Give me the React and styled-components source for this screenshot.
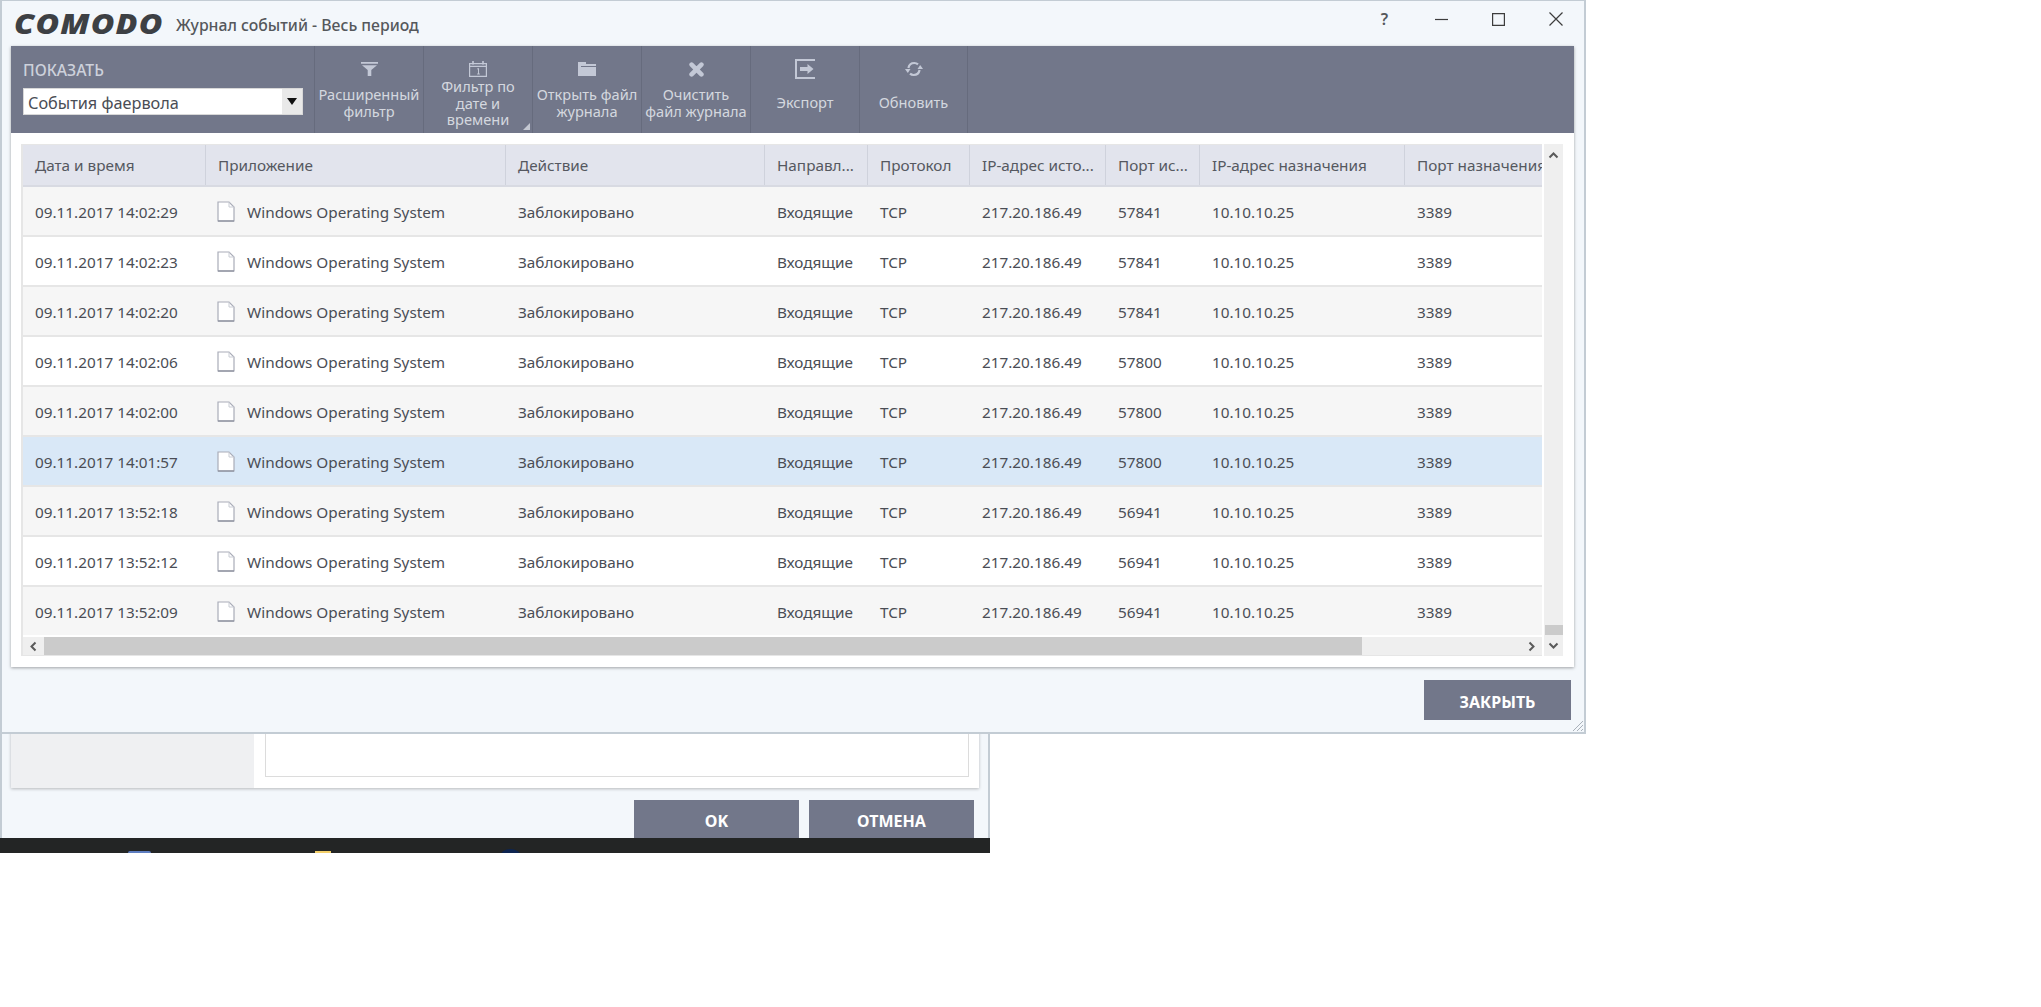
import React from "react";
import styled, { createGlobalStyle } from "styled-components";

const FONT = `"Noto Sans", "Open Sans", "Liberation Sans", sans-serif`;

const Global = createGlobalStyle`
  html, body {
    margin: 0;
    padding: 0;
    background: #fff;
    width: 2041px;
    height: 1007px;
    overflow: hidden;
    font-family: ${FONT};
  }
`;

const Desktop = styled.div`
  position: relative;
  width: 2041px;
  height: 1007px;
  background: #fff;
  overflow: hidden;
`;

/* ---------- окно позади ---------- */
const BackWindow = styled.div`
  position: absolute;
  left: 0;
  top: 700px;
  width: 990px;
  height: 138px;
  box-sizing: border-box;
  background: #f3f7fb;
  border-left: 2px solid #c3ccd4;
  border-right: 2px solid #c3ccd4;
  padding: 0 8px;
  display: flex;
  flex-direction: column;
`;

const BackPanel = styled.div`
  display: flex;
  height: 88px;
  flex: none;
  margin: 0 1px 0 1px;
  background: #fff;
  box-shadow: 0 1px 3px rgba(0, 0, 0, 0.25);
`;

const BackSide = styled.div`
  width: 243px;
  background: #eff0f2;
`;

const BackArea = styled.div`
  flex: 1;
  margin: 0 10px 11px 11px;
  border: 1px solid #dcdcdc;
  border-top: 0;
  background: #fff;
`;

const BackButtons = styled.div`
  display: flex;
  justify-content: flex-end;
  gap: 10px;
  margin-top: 12px;
  padding-right: 6px;
`;

const GreyButton = styled.button`
  box-sizing: border-box;
  width: ${(p) => p.$w}px;
  height: ${(p) => p.$h}px;
  border: 0;
  padding: 3px 0 0;
  background: #72778a;
  color: #fff;
  font-family: ${FONT};
  font-size: 16px;
  font-weight: 700;
`;

const Taskbar = styled.div`
  position: absolute;
  left: 0;
  top: 838px;
  width: 990px;
  height: 15px;
  background: #232525;
  overflow: hidden;
`;

const TrayIcon = styled.span`
  position: absolute;
  left: ${(p) => p.$x}px;
  top: ${(p) => p.$y}px;
  width: ${(p) => p.$w}px;
  height: 12px;
  background: ${(p) => p.$c};
  border-radius: ${(p) => p.$r || "2px"};
`;

/* ---------- журнал ---------- */
const LogWindow = styled.div`
  position: absolute;
  left: 0;
  top: 0;
  width: 1586px;
  height: 734px;
  box-sizing: border-box;
  background: #f3f7fb;
  border: 2px solid #c3ccd4;
  border-top-width: 1px;
  display: flex;
  flex-direction: column;
`;

const TitleBar = styled.div`
  height: 45px;
  flex: none;
  display: flex;
  align-items: center;
  padding-left: 12px;
`;

const LogoBox = styled.span`
  width: 162px;
  flex: none;
  margin-top: -1px;
`;

const Logo = styled.span`
  display: inline-block;
  font-family: "Open Sans", ${FONT};
  font-style: italic;
  font-weight: 800;
  font-size: 28px;
  line-height: 30px;
  letter-spacing: 1px;
  color: #3d4044;
  transform: scaleX(1.15);
  transform-origin: left center;
`;

const Title = styled.span`
  font-size: 15.8px;
  font-weight: 500;
  color: #55585c;
  margin-top: 3px;
`;

const WinControls = styled.div`
  margin-left: auto;
  display: flex;
  align-items: center;
  height: 36px;
  margin-top: -9px;
`;

const WinControl = styled.span`
  width: 57px;
  display: flex;
  justify-content: center;
  align-items: center;
  color: #55585c;
  font-size: 16px;
  font-weight: 600;
`;

const Panel = styled.div`
  margin: 0 10px 0 9px;
  height: 621px;
  flex: none;
  background: #fff;
  box-shadow: 0 1px 3px rgba(0, 0, 0, 0.35);
  display: flex;
  flex-direction: column;
`;

const Toolbar = styled.div`
  height: 87px;
  flex: none;
  display: flex;
  background: #72778a;
`;

const ShowBlock = styled.div`
  width: 303px;
  flex: none;
  box-sizing: border-box;
  padding: 14px 0 0 12px;
  display: flex;
  flex-direction: column;
`;

const ShowLabel = styled.div`
  color: #cdd1db;
  font-size: 15.7px;
  font-weight: 500;
  line-height: 20px;
  margin-bottom: 8px;
`;

const Select = styled.div`
  width: 280px;
  height: 27px;
  box-sizing: border-box;
  background: #fff;
  display: flex;
  align-items: center;
  border: 1px solid #d8d8d8;
  font-size: 16.3px;
  color: #4a4d55;
  padding-left: 4px;
`;

const SelectValue = styled.span`
  flex: 1;
  padding-top: 3px;
`;

const SelectArrow = styled.span`
  width: 20px;
  height: 100%;
  background: #e9e9e9;
  display: flex;
  align-items: center;
  justify-content: center;
`;

const Tool = styled.div`
  position: relative;
  width: 109px;
  flex: none;
  box-sizing: border-box;
  border-left: 1px solid #666b7d;
  display: flex;
  flex-direction: column;
  align-items: center;
  padding-top: 12px;
  color: #d4d7df;
  font-size: 14.6px;
  line-height: 16.5px;
  text-align: center;
  &:last-child {
    border-right: 1px solid #666b7d;
  }
`;

const ToolIcon = styled.span`
  height: 22px;
  display: flex;
  align-items: center;
  justify-content: center;
  margin-bottom: ${(p) => p.$gap}px;
`;

const ToolText = styled.span`
  white-space: pre;
`;

const Corner = styled.span`
  position: absolute;
  right: 2px;
  bottom: 3px;
  width: 0;
  height: 0;
  border-style: solid;
  border-width: 0 0 7px 7px;
  border-color: transparent transparent #c4c8d2 transparent;
`;

const TableZone = styled.div`
  flex: 1;
  display: flex;
  padding: 11px 11px 11px 10px;
  gap: 2px;
`;

const TableCol = styled.div`
  width: 1521px;
  flex: none;
  display: flex;
  flex-direction: column;
  border: 1px solid #e6e6e6;
  border-left-width: 2px;
  border-right: 0;
  overflow: hidden;
  box-sizing: border-box;
`;

const Grid = styled.div`
  display: grid;
  grid-template-columns: 183px 300px 259px 103px 102px 136px 94px 205px 145px;
  height: ${(p) => p.$h}px;
  flex: none;
  background: ${(p) => p.$bg};
  border-bottom: 2px solid ${(p) => p.$line};
  box-sizing: border-box;
  font-size: 15.3px;
  color: #4a4d55;
`;

const HeadCell = styled.div`
  display: flex;
  align-items: center;
  padding: 0 0 0 12px;
  white-space: nowrap;
  overflow: hidden;
  color: #555860;
  border-right: 1px solid #cfd2dc;
  &:last-child {
    border-right: 0;
  }
`;

const Cell = styled.div`
  display: flex;
  align-items: center;
  padding: 1px 0 0 12px;
  white-space: nowrap;
  overflow: hidden;
`;

const AppCell = styled(Cell)`
  padding-left: 11px;
  gap: 12px;
`;

const HBar = styled.div`
  height: 18px;
  flex: none;
  display: flex;
  align-items: center;
  background: #efefef;
`;

const HArrow = styled.span`
  width: 21px;
  flex: none;
  display: flex;
  justify-content: center;
  margin-left: ${(p) => (p.$end ? "auto" : "0")};
`;

const HThumb = styled.span`
  width: 1318px;
  height: 18px;
  flex: none;
  background: #cbcbcb;
`;

const VBar = styled.div`
  width: 19px;
  flex: none;
  background: #efefef;
  display: flex;
  flex-direction: column;
  align-items: center;
  padding: 6px 0 5px;
  box-sizing: border-box;
`;

const VThumb = styled.span`
  width: 18px;
  height: 10px;
  margin-top: auto;
  margin-bottom: 5px;
  background: #cbcbcb;
`;

const Footer = styled.div`
  flex: 1;
  display: flex;
  justify-content: flex-end;
  align-items: flex-start;
  padding: 13px 13px 0 0;
  position: relative;
`;

const Grip = styled.svg`
  position: absolute;
  right: 1px;
  bottom: 1px;
`;

const Chevron = ({ dir }) => {
  const rot = { up: 0, right: 90, down: 180, left: 270 }[dir];
  return (
    <svg width="11" height="11" viewBox="0 0 11 11" style={{ transform: `rotate(${rot}deg)` }}>
      <path d="M1.5 7.5 5.5 3.5 9.5 7.5" fill="none" stroke="#5a5a5a" strokeWidth="2" />
    </svg>
  );
};

const FileIcon = () => (
  <svg width="18" height="21" viewBox="0 0 18 21" style={{ flex: "none" }}>
    <path d="M1 1H12L17 6V20H1Z" fill="#fff" stroke="#a9acb8" strokeWidth="1.2" />
    <path d="M12 1V6H17" fill="none" stroke="#c9ccd4" strokeWidth="1" />
    <path d="M1 20H17" stroke="#8f92a0" strokeWidth="1.4" />
  </svg>
);

const ICON = "#c3c8d6";

const FilterIcon = () => (
  <svg width="17" height="14" viewBox="0 0 17 14">
    <path d="M0 0H17V1.8H0ZM1 3.2H16L10.3 8V14H6.7V8Z" fill={ICON} />
  </svg>
);

const CalendarIcon = () => (
  <svg width="18" height="16" viewBox="0 0 18 16">
    <path d="M.6 2.6H17.4V15.4H.6ZM.6 2.6H17.4V5.4H.6Z" fill="none" stroke={ICON} strokeWidth="1.2" />
    <path d="M4 0V3.4M14 0V3.4" stroke={ICON} strokeWidth="1.6" />
    <path d="M8.2 8 9.5 7.4V13M8.2 13H10.8" fill="none" stroke={ICON} strokeWidth="1" />
  </svg>
);

const FolderIcon = () => (
  <svg width="18" height="14" viewBox="0 0 18 14">
    <path d="M0 0H8V2H18V14H0Z" fill={ICON} />
    <path d="M3 4.5H18" stroke="#72778a" strokeWidth="1" />
  </svg>
);

const CrossIcon = () => (
  <svg width="15" height="15" viewBox="0 0 15 15">
    <path d="M2.6 2.6 12.4 12.4M12.4 2.6 2.6 12.4" stroke={ICON} strokeWidth="4.6" strokeLinecap="round" />
  </svg>
);

const ExportIcon = () => (
  <svg width="20" height="20" viewBox="0 0 20 20">
    <path d="M20 1H1V19H20" fill="none" stroke={ICON} strokeWidth="2" />
    <path d="M5 8H12.5V5L18.5 10 12.5 15V12H5Z" fill={ICON} />
  </svg>
);

const RefreshIcon = () => (
  <svg width="18" height="16" viewBox="0 0 18 16">
    <path d="M3.4 7C4 4 6.3 2 9.3 2 10.8 2 12 2.5 13 3.4" fill="none" stroke={ICON} strokeWidth="2.2" />
    <path d="M14.6 9C14 12 11.7 14 8.7 14 7.2 14 6 13.5 5 12.6" fill="none" stroke={ICON} strokeWidth="2.2" />
    <path d="M12.5 8H18L15.2 4Z" fill={ICON} />
    <path d="M0 8H5.5L2.8 12Z" fill={ICON} />
  </svg>
);

const tools = [
  { label: "Расширенный\nфильтр", icon: <FilterIcon />, gap: 6 },
  { label: "Фильтр по\nдате и\nвремени", icon: <CalendarIcon />, gap: -2, corner: true },
  { label: "Открыть файл\nжурнала", icon: <FolderIcon />, gap: 6 },
  { label: "Очистить\nфайл журнала", icon: <CrossIcon />, gap: 6 },
  { label: "Экспорт", icon: <ExportIcon />, gap: 14 },
  { label: "Обновить", icon: <RefreshIcon />, gap: 14 },
];

const heads = [
  "Дата и время",
  "Приложение",
  "Действие",
  "Направл...",
  "Протокол",
  "IP-адрес исто...",
  "Порт ис...",
  "IP-адрес назначения",
  "Порт назначения",
];

const rows = [
  ["09.11.2017 14:02:29", "57841"],
  ["09.11.2017 14:02:23", "57841"],
  ["09.11.2017 14:02:20", "57841"],
  ["09.11.2017 14:02:06", "57800"],
  ["09.11.2017 14:02:00", "57800"],
  ["09.11.2017 14:01:57", "57800"],
  ["09.11.2017 13:52:18", "56941"],
  ["09.11.2017 13:52:12", "56941"],
  ["09.11.2017 13:52:09", "56941"],
];

const rowBg = (i) => {
  if (i === 5) return "#d9e8f7";
  return i % 2 === 0 ? "#f6f6f6" : "#fff";
};

export default function App() {
  return (
    <Desktop>
      <Global />
      <BackWindow>
        <BackPanel>
          <BackSide />
          <BackArea />
        </BackPanel>
        <BackButtons>
          <GreyButton $w={165} $h={38}>OK</GreyButton>
          <GreyButton $w={165} $h={38}>ОТМЕНА</GreyButton>
        </BackButtons>
      </BackWindow>
      <Taskbar>
        <TrayIcon $x={128} $y={13} $w={23} $c="#5d7dc0" />
        <TrayIcon $x={315} $y={13} $w={16} $c="#f3cf6a" $r="0" />
        <TrayIcon $x={501} $y={11} $w={19} $c="#0d2450" $r="50%" />
      </Taskbar>

      <LogWindow>
        <TitleBar>
          <LogoBox>
            <Logo>COMODO</Logo>
          </LogoBox>
          <Title>Журнал событий - Весь период</Title>
          <WinControls>
            <WinControl>?</WinControl>
            <WinControl>
              <svg width="13" height="13" viewBox="0 0 13 13"><path d="M0 6.5H13" stroke="#3d3d3d" strokeWidth="1.2" /></svg>
            </WinControl>
            <WinControl>
              <svg width="13" height="13" viewBox="0 0 13 13"><path d="M.6.6H12.4V12.4H.6Z" fill="none" stroke="#3d3d3d" strokeWidth="1.2" /></svg>
            </WinControl>
            <WinControl>
              <svg width="14" height="14" viewBox="0 0 14 14"><path d="M.5.5 13.5 13.5M13.5.5.5 13.5" stroke="#3d3d3d" strokeWidth="1.2" /></svg>
            </WinControl>
          </WinControls>
        </TitleBar>

        <Panel>
          <Toolbar>
            <ShowBlock>
              <ShowLabel>ПОКАЗАТЬ</ShowLabel>
              <Select>
                <SelectValue>События фаервола</SelectValue>
                <SelectArrow>
                  <svg width="10" height="7" viewBox="0 0 10 7"><path d="M0 0H10L5 7Z" fill="#111" /></svg>
                </SelectArrow>
              </Select>
            </ShowBlock>
            {tools.map((t) => (
              <Tool key={t.label}>
                <ToolIcon $gap={t.gap}>{t.icon}</ToolIcon>
                <ToolText>{t.label}</ToolText>
                {t.corner && <Corner />}
              </Tool>
            ))}
          </Toolbar>

          <TableZone>
            <TableCol>
              <Grid $h={42} $bg="#e2e4ed" $line="#d8dae2">
                {heads.map((h) => (
                  <HeadCell key={h}>{h}</HeadCell>
                ))}
              </Grid>
              {rows.map(([time, port], i) => (
                <Grid key={time} $h={50} $bg={rowBg(i)} $line={i === 8 ? "#fff" : "#e6e6e6"}>
                  <Cell>{time}</Cell>
                  <AppCell>
                    <FileIcon />
                    Windows Operating System
                  </AppCell>
                  <Cell>Заблокировано</Cell>
                  <Cell>Входящие</Cell>
                  <Cell>TCP</Cell>
                  <Cell>217.20.186.49</Cell>
                  <Cell>{port}</Cell>
                  <Cell>10.10.10.25</Cell>
                  <Cell>3389</Cell>
                </Grid>
              ))}
              <HBar>
                <HArrow><Chevron dir="left" /></HArrow>
                <HThumb />
                <HArrow $end><Chevron dir="right" /></HArrow>
              </HBar>
            </TableCol>
            <VBar>
              <Chevron dir="up" />
              <VThumb />
              <Chevron dir="down" />
            </VBar>
          </TableZone>
        </Panel>

        <Footer>
          <GreyButton $w={147} $h={40}>ЗАКРЫТЬ</GreyButton>
          <Grip width="11" height="11" viewBox="0 0 11 11">
            <path d="M1 11 11 1M5 11 11 5M9 11 11 9" stroke="#a9b1ba" strokeWidth="1" />
          </Grip>
        </Footer>
      </LogWindow>
    </Desktop>
  );
}
